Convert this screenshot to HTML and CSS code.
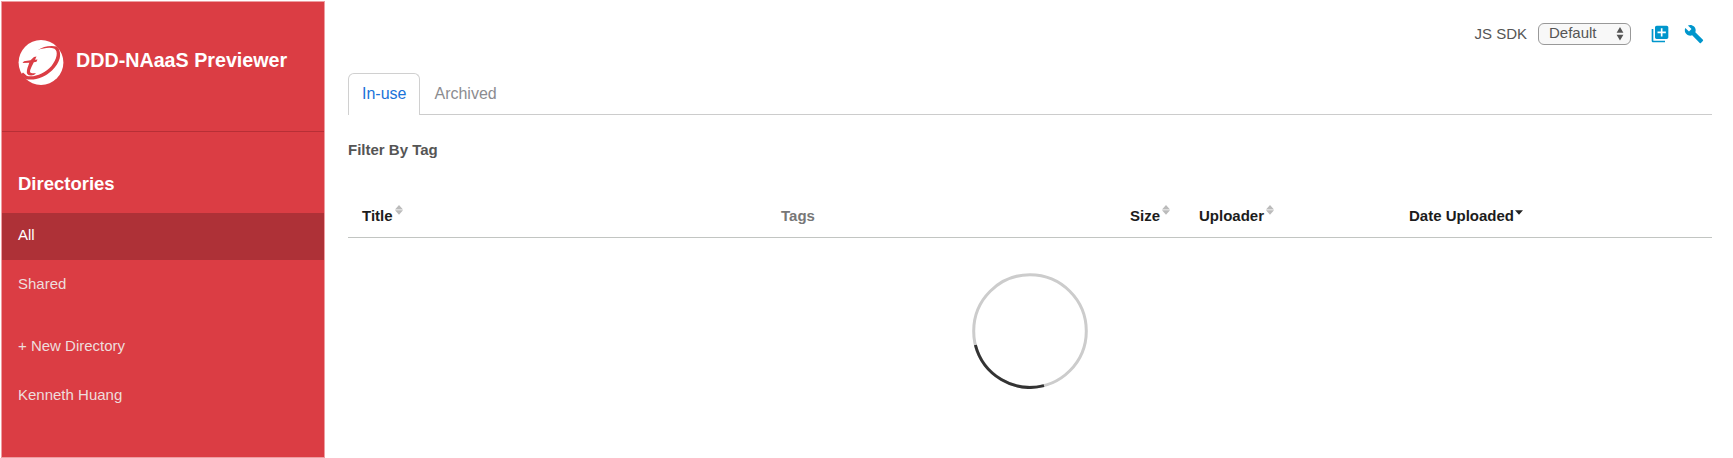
FILE: index.html
```html
<!DOCTYPE html>
<html lang="en">
<head>
<meta charset="utf-8">
<title>DDD-NAaaS Previewer</title>
<link rel="stylesheet" href="styles.css">
</head>
<body>
<div class="app">
  <aside class="sidebar">
    <header class="brand">
      <svg class="logo" viewBox="0 0 46 46">
        <circle cx="23" cy="23.500" r="22.400" fill="#fff"/>
        <path d="M19.500 11.200C25 7.500 32 6 39 7.500C45 14 42 24 34 31.500C26 39 16 42 7.500 40L3 35.500L5 33.500L9 37C17 38.500 27 34.500 33.500 27C39 20 40.500 12.500 36.500 9.800C32 8 26 9 19.500 11.200Z" fill="#db3d44"/>
        <path d="M4.500 24L6 22.200L12.500 21.300L16 18L18.500 17.500L17 20.800L19.500 20.500L18.500 22.800L15.800 23.200C13.500 28 11.500 31.500 12.200 33.200C13 34.500 15.500 34.500 18 34L16 36C12 37 9 36 8.800 33.500C8.700 30.500 10 27.500 11.300 23.800Z" fill="#db3d44"/>
      </svg>
      <h1 class="brand-name">DDD-NAaaS Previewer</h1>
    </header>
    <h2 class="nav-title">Directories</h2>
    <nav class="nav">
      <a class="nav-item active">All</a>
      <a class="nav-item">Shared</a>
      <a class="nav-item new">+ New Directory</a>
      <a class="nav-item">Kenneth Huang</a>
    </nav>
  </aside>
  <main class="main">
    <div class="toolbar">
      <span class="label">JS SDK</span>
      <div class="select">
        <span>Default</span>
        <svg width="8" height="14" viewBox="0 0 8 14"><path d="M4 0L7.400 5.800H.6ZM4 13.500L.6 7.700H7.400Z" fill="#555"/></svg>
      </div>
      <svg class="icon add" viewBox="0 0 24 24"><path d="M4 6H2v14c0 1.100.9 2 2 2h14v-2H4V6zm16-4H8c-1.100 0-2 .9-2 2v12c0 1.100.9 2 2 2h12c1.100 0 2-.9 2-2V4c0-1.100-.9-2-2-2zm-1 9h-4v4h-2v-4H9V9h4V5h2v4h4v2z"/></svg>
      <svg class="icon wrench" viewBox="0 0 24 24"><path d="M22.700 19l-9.100-9.100c.9-2.300.4-5-1.500-6.900-2-2-5-2.400-7.400-1.300L9 6 6 9 1.600 4.700C.4 7.100.9 10.100 2.900 12.100c1.900 1.900 4.600 2.400 6.900 1.500l9.100 9.100c.4.4 1 .4 1.400 0l2.300-2.300c.5-.4.5-1.100.1-1.400z"/></svg>
    </div>
    <div class="tabs">
      <a class="tab current">In-use</a>
      <a class="tab">Archived</a>
    </div>
    <h3 class="filter">Filter By Tag</h3>
    <div class="thead">
      <div class="th">Title<svg class="sort" viewBox="0 0 8 10"><path d="M4 0L8 4.500H0ZM4 9.800L0 5.300H8Z"/></svg></div>
      <div class="th plain">Tags</div>
      <div class="th">Size<svg class="sort" viewBox="0 0 8 10"><path d="M4 0L8 4.500H0ZM4 9.800L0 5.300H8Z"/></svg></div>
      <div class="th">Uploader<svg class="sort" viewBox="0 0 8 10"><path d="M4 0L8 4.500H0ZM4 9.800L0 5.300H8Z"/></svg></div>
      <div class="th">Date Uploaded<svg class="sort desc" viewBox="0 0 8 10"><path d="M0 5.300H8L4 9.800Z"/></svg></div>
    </div>
    <svg class="spinner" viewBox="0 0 116 116">
      <circle cx="58" cy="58" r="56.300" fill="none" stroke="#ccc" stroke-width="3"/>
      <path d="M3.400 72A56.300 56.300 0 0 0 72 112.600" fill="none" stroke="#333" stroke-width="3"/>
    </svg>
  </main>
</div>
</body>
</html>
```
FILE: styles.css
```css
* { box-sizing: border-box; }
body {
  margin: 0;
  background: #fff;
  color: #555;
  font: 15px/20px "Liberation Sans", Arial, sans-serif;
}
.app { display: flex; height: 458px; overflow: hidden; }
h1, h2, h3 { margin: 0; }

.sidebar {
  flex: none;
  width: 324px;
  height: 457px;
  margin: 1px 0 0 1px;
  background: #db3d44;
  border: 1px solid #ee9da1;
}
.brand {
  display: flex;
  align-items: flex-start;
  gap: 12px;
  height: 130px;
  padding: 37px 0 0 16px;
  border-bottom: 1px solid #b72f36;
}
.logo { width: 46px; height: 46px; }
.brand-name {
  color: #fff;
  font-size: 19.700px;
  line-height: 24px;
  padding-top: 9px;
  white-space: nowrap;
}
.nav-title {
  height: 81px;
  padding: 40px 0 0 16px;
  color: #fff;
  font-size: 18.500px;
  line-height: 24px;
}
.nav { display: flex; flex-direction: column; gap: 3px; }
.nav-item {
  height: 46px;
  padding-left: 16px;
  line-height: 44px;
  color: #eedddd;
}
.nav-item.active { height: 47px; margin-bottom: -1px; background: #ae3137; color: #fff; }
.nav-item.new { margin-top: 13px; }

.main {
  flex: 1;
  display: flex;
  flex-direction: column;
  padding: 22px 21px 0 23px;
}
.toolbar {
  display: flex;
  align-items: center;
  justify-content: flex-end;
  height: 24px;
  padding-right: 8px;
}
.label { margin-right: 11px; }
.select {
  display: flex;
  align-items: center;
  justify-content: space-between;
  width: 93px;
  height: 22px;
  padding: 0 6px 2px 10px;
  background: #f8f8f8;
  border: 1px solid #999;
  border-radius: 6px;
}
.select svg { position: relative; top: 1px; }
.icon { fill: #0096cc; width: 20px; height: 20px; }
.add { margin-left: 19px; }
.wrench { margin-left: 14px; }

.tabs {
  display: flex;
  height: 42px;
  margin-top: 27px;
  font-size: 16px;
  line-height: 41px;
  border-bottom: 1px solid #ccc;
}
.tab { padding: 0 14px; color: #8c8c90; }
.tab.current {
  height: 42px;
  padding: 0 13px;
  color: #1a73d9;
  background: #fff;
  border: 1px solid #d0d0d0;
  border-bottom: 0;
  border-radius: 6px 6px 0 0;
  line-height: 39px;
}
.filter { margin-top: 25px; font-size: 15px; line-height: 20px; }
.thead {
  display: grid;
  grid-template-columns: 419px 349px 69px 210px 1fr;
  height: 49px;
  margin-top: 29px;
  padding: 17px 0 0 14px;
  border-bottom: 1px solid #c2c5c2;
}
.th { display: flex; align-items: flex-start; color: #1c1c1c; font-weight: bold; }
.plain { color: #777; }
.sort { width: 8px; height: 10px; margin: -1px 0 0 2px; fill: #bbb; }
.desc { margin-left: 1px; fill: #222; }
.spinner { width: 116px; height: 116px; margin: 35px 0 0 624px; }
```
